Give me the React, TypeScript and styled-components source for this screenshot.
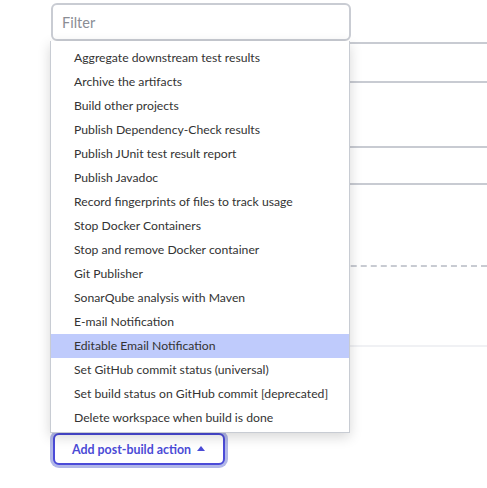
import styled, { createGlobalStyle } from 'styled-components';

const actions = [
	'Aggregate downstream test results',
	'Archive the artifacts',
	'Build other projects',
	'Publish Dependency-Check results',
	'Publish JUnit test result report',
	'Publish Javadoc',
	'Record fingerprints of files to track usage',
	'Stop Docker Containers',
	'Stop and remove Docker container',
	'Git Publisher',
	'SonarQube analysis with Maven',
	'E-mail Notification',
	'Editable Email Notification',
	'Set GitHub commit status (universal)',
	'Set build status on GitHub commit [deprecated]',
	'Delete workspace when build is done',
];

const activeAction = 'Editable Email Notification';

const App = () => {
	return (
		<>
			<GlobalStyle />
			<Page>
				<FilterInput placeholder="Filter" />
				<Divider $top={1} />
				<Divider $top={37} />
				<Divider $top={63} />
				<Divider $top={35} />
				<Divider $top={80} $variant="dashed" />
				<Divider $top={78} $variant="faint" />
				<AddButton>
					Add post-build action
					<Caret viewBox="0 0 8 5" aria-hidden>
						<path d="M0 5 L4 0 L8 5 Z" fill="currentColor" />
					</Caret>
				</AddButton>

				<Menu>
					{actions.map(action => (
						<MenuItem key={action} $active={action === activeAction}>
							{action}
						</MenuItem>
					))}
				</Menu>
			</Page>
		</>
	);
};

const GlobalStyle = createGlobalStyle`
	body {
		margin: 0;
		background: #fff;
		font-family: Lato, 'Noto Sans', sans-serif;
		color: #333;
	}
`;

const Page = styled.div`
	position: relative;
	display: flex;
	flex-direction: column;
	align-items: flex-start;
	padding: 3px 0 0 50px;
	height: 488px;
	box-sizing: border-box;
	overflow: hidden;
`;

const FilterInput = styled.input`
	box-sizing: border-box;
	width: 300px;
	height: 38px;
	margin-left: 1px;
	padding: 0 9px;
	border: 2px solid #c9ccd3;
	border-radius: 6px;
	font: inherit;
	font-size: 14.5px;
	color: #333;
	outline: none;

	&::placeholder {
		color: #8a8d94;
	}
`;

const Divider = styled.div<{ $top: number; $variant?: 'solid' | 'dashed' | 'faint' }>`
	align-self: stretch;
	margin-top: ${({ $top }) => $top}px;
	height: 0;
	border-top: 2px ${({ $variant }) => ($variant === 'dashed' ? 'dashed' : 'solid')}
		${({ $variant }) => ($variant === 'faint' ? '#f0f1f4' : '#c8cbd2')};
`;

const AddButton = styled.button`
	display: inline-flex;
	align-items: center;
	gap: 6px;
	box-sizing: border-box;
	margin: 86px 0 0 3px;
	height: 32px;
	padding: 0 18px 0 17px;
	background: #fff;
	border: 2px solid #4b4bd8;
	border-radius: 6px;
	box-shadow: 0 0 0 3px #b1b7e8;
	font: inherit;
	font-size: 12.4px;
	font-weight: 700;
	color: #4b4bd6;
	cursor: pointer;
`;

const Caret = styled.svg`
	width: 8px;
	height: 5px;
	margin-top: -1px;
`;

const Menu = styled.ul`
	position: absolute;
	top: 41px;
	left: 50px;
	box-sizing: border-box;
	width: 300px;
	margin: 0;
	padding: 5px 0 2px;
	list-style: none;
	background: #fff;
	border: 1px solid #c8ccd3;
	border-top: none;
	box-shadow: 0 4px 12px rgba(0, 0, 0, 0.16);
`;

const MenuItem = styled.li<{ $active?: boolean }>`
	height: 24px;
	line-height: 24px;
	padding-left: 23px;
	font-size: 12.2px;
	color: #333;
	white-space: nowrap;
	background: ${({ $active }) => ($active ? '#bfcbfc' : 'transparent')};
`;

export default App;
